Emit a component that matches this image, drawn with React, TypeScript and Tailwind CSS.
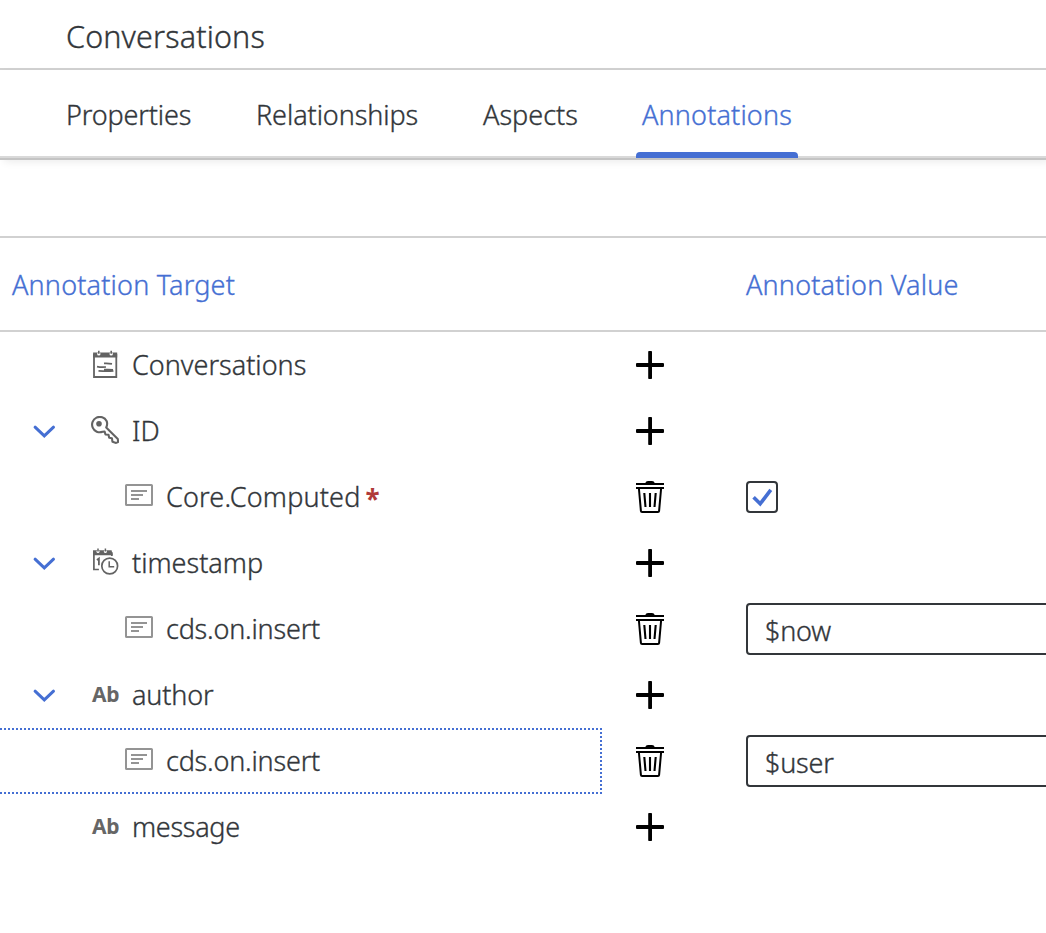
import type { ReactNode } from "react";

type Kind = "entity" | "key" | "note" | "time" | "text";

interface Row {
  label: ReactNode;
  kind: Kind;
  spacing: string;
  expanded?: boolean;
  child?: boolean;
  focused?: boolean;
  required?: boolean;
  checked?: boolean;
  value?: string;
}

const rows: Row[] = [
  { label: "Conversations", kind: "entity", spacing: "" },
  { label: "ID", kind: "key", spacing: "", expanded: true },
  { label: "Core.Computed", kind: "note", spacing: "tracking-[0.16px]", child: true, required: true, checked: true },
  { label: "timestamp", kind: "time", spacing: "", expanded: true },
  { label: "cds.on.insert", kind: "note", spacing: "tracking-[-0.2px]", child: true, value: "$now" },
  { label: "author", kind: "text", spacing: "tracking-[-0.15px]", expanded: true },
  { label: "cds.on.insert", kind: "note", spacing: "tracking-[-0.2px]", child: true, focused: true, value: "$user" },
  { label: "message", kind: "text", spacing: "tracking-[-0.3px]" },
];

function KindIcon({ kind }: { kind: Kind }) {
  if (kind === "text") {
    return <div className="h-7 w-7 pl-px text-[21px] leading-7 font-bold tracking-[-0.4px] text-[#666] [-webkit-text-stroke:0]">Ab</div>;
  }
  if (kind === "note") {
    return (
      <svg className="h-7 w-7" viewBox="0 0 28 28" fill="none" stroke="#949494" strokeWidth="2">
        <rect x="1" y="3" width="26" height="20" rx="0.6" />
        <path d="M6 9h16M6 13h12M6 17h8" />
      </svg>
    );
  }
  if (kind === "entity") {
    return (
      <svg className="h-7 w-7" viewBox="0 0 28 28" fill="none" stroke="#636363" strokeWidth="1.5">
        <path d="M3 4v23h22.3V4" strokeWidth="1.8" />
        <path d="M2.1 2.5h24.1v5H2.1z" fill="#636363" stroke="none" />
        <circle cx="7.8" cy="3.9" r="1.7" fill="white" stroke="none" />
        <circle cx="20.2" cy="3.9" r="1.7" fill="white" stroke="none" />
        <path d="M7.8 .8v3M20.2 .8v3" strokeWidth="1.6" />
        <path d="M13 13.4q4-.3 8 .5M6 16.6q4 .8 9 .4M13 19.7q5-.4 9 .2M7.5 20.9q8 .6 15 .1" strokeWidth="1.7" />
      </svg>
    );
  }
  if (kind === "key") {
    return (
      <svg className="h-7 w-7" viewBox="0 0 28 28" fill="none" stroke="#636363" strokeWidth="2.1" strokeLinejoin="round">
        <path d="M15.6 5A7.7 7.7 0 1 0 11.5 15.8l2.1-.3.9 3 3 .3.7 3 2.7.4.6 3.6 3.6 1.1 2-.9-.3-3-11.6-11.5q1.7-3.2.4-6.5z" />
        <circle cx="8" cy="7.7" r="2.8" fill="#636363" stroke="none" />
      </svg>
    );
  }
  return (
    <svg className="h-7 w-7" viewBox="0 0 28 28" fill="none" stroke="#636363" strokeWidth="1.7">
      <path d="M2.9 4v17.5h5M20.8 8V4.2" />
      <path d="M2 2.3h18.6l1.2 5H2z" fill="#636363" stroke="none" />
      <circle cx="7" cy="3.5" r="1.5" fill="white" stroke="none" />
      <circle cx="14.4" cy="3.5" r="1.5" fill="white" stroke="none" />
      <path d="M7 .4v3M14.4 .4v3" strokeWidth="1.5" />
      <path d="m5.9 12 2-1.4v6.6" strokeWidth="1.8" />
      <circle cx="18.7" cy="18" r="7.9" fill="white" />
      <path d="M18.2 13.2v5.5h5" strokeWidth="1.5" />
    </svg>
  );
}

function ExpandIcon() {
  return (
    <svg className="h-4 w-6" viewBox="0 0 24 16" fill="none" stroke="#456fd3" strokeWidth="3" strokeLinecap="round" strokeLinejoin="miter">
      <path d="m3.1 4.2 9.2 8.7 9.2-8.7" />
    </svg>
  );
}

function AddIcon() {
  return (
    <svg className="h-8 w-8" viewBox="0 0 32 32" fill="black">
      <rect x="2" y="14" width="28" height="4" rx="1" />
      <rect x="14.2" y="2" width="3.8" height="28" rx="0.8" />
    </svg>
  );
}

function DeleteIcon() {
  return (
    <svg className="h-8 w-8" viewBox="0 0 32 32" fill="none" stroke="black" strokeWidth="2">
      <path d="M2 3h28M2 7h28" />
      <path d="M11 2.4Q12 0 14 0h4q2 0 3 2.4z" fill="black" stroke="none" />
      <path d="m4.9 7.5 2 22.3q.1 1.2 1.2 1.2h15.8q1.1 0 1.2-1.2l2-22.3" />
      <path d="m10.3 12 1.2 14M16 12v14m5.7-14-1.2 14" strokeWidth="2.1" />
    </svg>
  );
}

function TreeRow({ row }: { row: Row }) {
  const frame = row.focused ? "border-[#456fd3]" : "border-transparent";
  return (
    <div className="flex h-[66px]">
      <div className={`flex w-[602px] shrink-0 items-center border-y-2 border-r-2 border-dotted ${frame}`}>
        <div className={row.child ? "w-[125px] shrink-0" : "flex w-[91px] shrink-0 items-center pl-8"}>
          {row.expanded && <ExpandIcon />}
        </div>
        <div className="-mt-0.5 w-[41px] shrink-0">
          <KindIcon kind={row.kind} />
        </div>
        <span className={`whitespace-nowrap ${row.spacing}`}>{row.label}</span>
        {row.required && <span className="mt-1 ml-[5px] text-[26px] font-bold text-[#b03a3a] [-webkit-text-stroke:0]">*</span>}
      </div>
      <div className="flex w-36 shrink-0 items-center pl-8">{row.child ? <DeleteIcon /> : <AddIcon />}</div>
      <div className="flex flex-1 items-center">
        {row.checked && (
          <div className="flex h-8 w-8 items-center justify-center rounded-[4px] border-2 border-[#32363a]">
            <svg className="h-7 w-7" viewBox="0 0 28 28" fill="none" stroke="#456fd3" strokeWidth="3.6">
              <path d="m5.6 14.2 6.6 6.6L22.8 6.8" />
            </svg>
          </div>
        )}
        {row.value && (
          <div className="flex h-[52px] w-[400px] shrink-0 items-center rounded-[4px] border-2 border-[#32363a] pt-1 pl-[17px] tracking-[-0.2px]">
            {row.value}
          </div>
        )}
      </div>
    </div>
  );
}

export default function App() {
  return (
    <div className="h-[933px] w-full overflow-hidden bg-white font-['Noto_Sans',sans-serif] text-[27px] leading-9 font-light text-[#32363a] [-webkit-text-stroke:0.35px]">
      <header className="flex h-[70px] items-center border-b-2 border-[#d1d1d1] pt-1 pl-[66px] text-[30.5px] tracking-[0.15px]">Conversations</header>
      <nav className="flex h-22 items-stretch border-b-2 border-[#d9d9d9] pl-[60px] shadow-[0_2px_0_#c4c4c4,4px_4px_8px_rgba(0,0,0,0.08)]">
        <div className="flex w-[190px] items-center pt-1 pl-1.5 tracking-[-0.15px]">Properties</div>
        <div className="flex w-[227px] items-center pt-1 pl-1.5 tracking-[-0.08px]">Relationships</div>
        <div className="flex w-[159px] items-center pt-1 pl-1.5">Aspects</div>
        <div className="relative flex w-[162px] items-center pt-1 pl-1.5 tracking-[0.15px] text-[#456fd3]">
          Annotations
          <span className="absolute inset-x-0 -bottom-0.5 h-1.5 rounded-t-[4px] bg-[#456fd3]" />
        </div>
      </nav>
      <div className="h-[78px]" />
      <div className="flex h-24 items-center border-y-2 border-[#d1d1d1] pt-0.5 pl-3 tracking-[0.18px] text-[#456fd3]">
        <div className="w-[734px] shrink-0">Annotation Target</div>
        <div className="shrink-0">Annotation Value</div>
      </div>
      <main>
        {rows.map((row, index) => (
          <TreeRow key={index} row={row} />
        ))}
      </main>
    </div>
  );
}
